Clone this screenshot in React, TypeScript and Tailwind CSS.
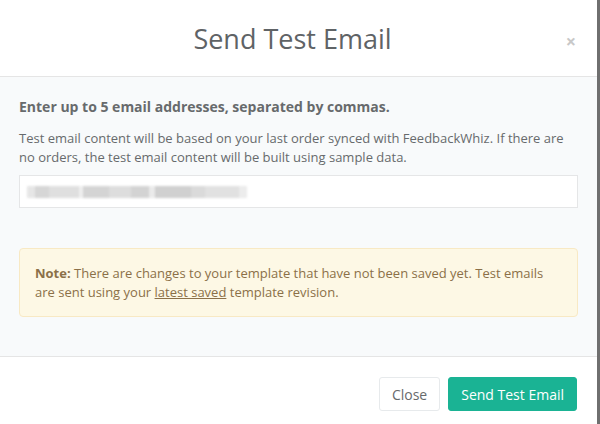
export default function App() {
  const blurBlocks = [
    { w: 8, t: "bg-[#e4e4e4]" },
    { w: 14, t: "bg-[#d2d2d2]" },
    { w: 30, t: "bg-[#dcdcdc]" },
    { w: 4, t: "bg-[#eeeeee]" },
    { w: 26, t: "bg-[#d0d0d0]" },
    { w: 22, t: "bg-[#dadada]" },
    { w: 18, t: "bg-[#cfcfcf]" },
    { w: 6, t: "bg-[#e8e8e8]" },
    { w: 36, t: "bg-[#cbcbcb]" },
    { w: 14, t: "bg-[#d6d6d6]" },
    { w: 34, t: "bg-[#dedede]" },
    { w: 8, t: "bg-[#eaeaea]" },
  ];

  return (
    <div
      className="flex h-[424px] w-[600px] overflow-hidden bg-white text-[#676a6c]"
      style={{ fontFamily: '"Open Sans", "Liberation Sans", sans-serif' }}
    >
      <div className="flex h-full w-[597px] flex-col">
        {/* header */}
        <div className="relative flex h-[77px] items-center justify-center border-b border-[#e5e5e5] bg-white pr-[12px]">
          <h4 className="text-[27px] leading-none font-normal text-[#5f6366]">
            Send Test Email
          </h4>
          <span className="absolute top-[32px] right-[21px] text-[18px] leading-none font-bold text-[#c8c8c8]">
            ×
          </span>
        </div>

        {/* body */}
        <div className="flex h-[279px] flex-col bg-[#f8fafb] px-[19px] pt-[20px]">
          <p className="text-[14px] leading-[20px] font-bold text-[#676a6c]">
            Enter up to 5 email addresses, separated by commas.
          </p>
          <p className="mt-[12px] text-[13px] leading-[19px] text-[#676a6c]">
            Test email content will be based on your last order synced with FeedbackWhiz. If there are
            no orders, the test email content will be built using sample data.
          </p>
          <div className="mt-[8px] flex h-[33px] items-center border border-[#e5e6e7] bg-white pl-[7px]">
            <div className="flex h-[12px] flex-wrap opacity-90 blur-[1px]">
              {blurBlocks.map((b, i) => (
                <div key={i} className={`h-[12px] ${b.t}`} style={{ width: b.w }} />
              ))}
            </div>
          </div>

          <div className="mt-[40px] rounded-[4px] border border-[#f8e9c4] bg-[#fdf8e5] px-[15px] pt-[15px] pb-[14px] text-[13px] leading-[19px] text-[#8b7048]">
            <span className="font-bold">Note:</span> There are changes to your template that have not
            been saved yet. Test emails are sent using your <span className="underline">latest saved</span>{" "}
            template revision.
          </div>
        </div>

        {/* footer */}
        <div className="flex flex-1 items-start justify-end gap-[8px] border-t border-[#e5e5e5] bg-white px-[20px] pt-[20px]">
          <button className="h-[34px] rounded-[3px] border border-[#e7eaec] bg-white px-[12px] text-[14px] text-[#676a6c]">
            Close
          </button>
          <button className="h-[34px] rounded-[3px] border border-[#1ab394] bg-[#1ab394] px-[12px] text-[14px] text-white">
            Send Test Email
          </button>
        </div>
      </div>
      <div className="h-full w-[3px] bg-[#6f6f6f]" />
    </div>
  );
}
